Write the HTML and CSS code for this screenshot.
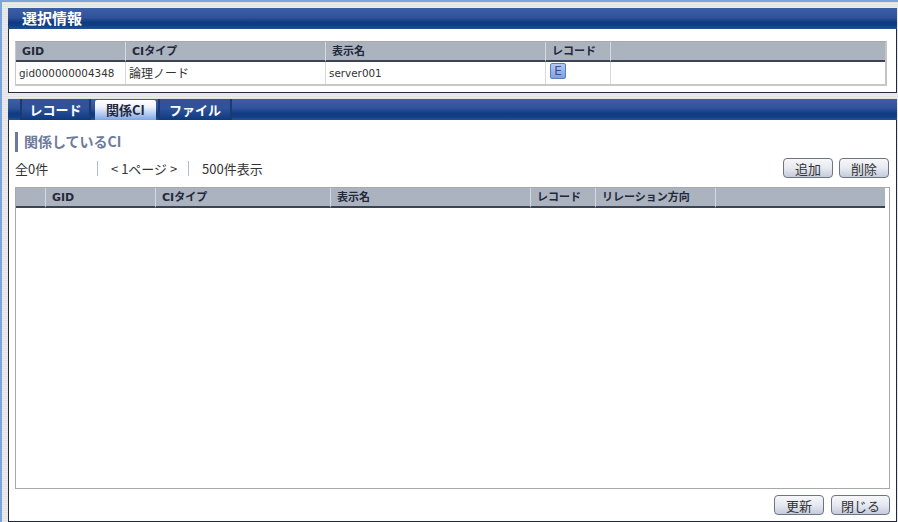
FILE: index.html
```html
<!DOCTYPE html>
<html lang="ja">
<head>
<meta charset="utf-8">
<title>選択情報</title>
<link rel="stylesheet" href="styles.css">
</head>
<body>
<section class="panel selected">
  <h1 class="bar">選択情報</h1>
  <div class="panel-body">
    <div class="table-wrap">
      <table class="grid">
        <colgroup><col class="s1"><col class="s2"><col class="s3"><col class="s4"><col></colgroup>
        <thead><tr><th>GID</th><th>CIタイプ</th><th>表示名</th><th>レコード</th><th></th></tr></thead>
        <tbody><tr>
          <td class="latin">gid000000004348</td><td class="cjk">論理ノード</td><td class="latin">server001</td>
          <td class="iconcell"><span class="e-btn">E</span></td><td></td>
        </tr></tbody>
      </table>
    </div>
  </div>
</section>
<section class="panel related">
  <nav class="bar tabs">
    <a class="tab">レコード</a>
    <a class="tab active">関係CI</a>
    <a class="tab">ファイル</a>
  </nav>
  <div class="panel-body main">
    <h2 class="title">関係しているCI</h2>
    <div class="toolbar">
      <span class="count">全0件</span>
      <span class="pager">&lt; 1ページ &gt;</span>
      <span class="perpage">500件表示</span>
      <span class="actions"><button class="btn">追加</button><button class="btn">削除</button></span>
    </div>
    <div class="list">
      <table class="grid">
        <colgroup><col class="r1"><col class="r2"><col class="r3"><col class="r4"><col class="r5"><col class="r6"><col></colgroup>
        <thead><tr><th></th><th>GID</th><th>CIタイプ</th><th>表示名</th><th>レコード</th><th>リレーション方向</th><th></th></tr></thead>
      </table>
    </div>
    <div class="footer"><button class="btn">更新</button><button class="btn wide">閉じる</button></div>
  </div>
</section>
</body>
</html>
```

FILE: styles.css
```css
* { box-sizing: border-box; }
html, body { margin: 0; height: 100%; }
body {
  width: 898px;
  height: 522px;
  overflow: hidden;
  padding: 6px 1px 0 6px;
  border-top: 2px solid #7ba3dc;
  border-left: 2px solid #7ba3dc;
  background: repeating-linear-gradient(#e2e2e2 0 1px, #ececec 1px 2px);
  font-family: "DejaVu Sans", "Noto Sans CJK JP", sans-serif;
  color: #222;
}
.bar {
  height: 21px;
  margin: 0;
  background: linear-gradient(#3c5fa8 0, #2f5299 45%, #0d3a80 70%, #123f86 85%, #2a4f92 100%);
  color: #fff;
  font-size: 15px;
  font-weight: 700;
  line-height: 20px;
  padding-left: 14px;
  font-family: "Noto Sans CJK JP", sans-serif;
}
.panel-body {
  background: #fff;
  border: 1px solid #23283c;
  border-top: 0;
}
.selected .panel-body { height: 64px; padding: 12px 9px 0 6px; }
.related { margin-top: 6px; }
.table-wrap {
  height: 45px;
  border: 1px solid #b0b0b0;
  border-width: 1px 2px 2px 1px;
  border-color: #a8a8a8 #c4c4c4 #c8c8c8 #c8c8c8;
}
.grid { border-collapse: separate; border-spacing: 0; table-layout: fixed; width: 869px; }
.grid th {
  height: 20px;
  padding: 2px 0 0 6px;
  background: #abb3bf;
  border-bottom: 2px solid #3c4354;
  border-right: 1px solid #d6dae0;
  color: #23283c;
  font-size: 11px;
  font-weight: 700;
  text-align: left;
  line-height: 16px;
}
.grid th:last-child { border-right: 0; }
.grid td {
  height: 22px;
  padding: 0 0 0 3px;
  border-right: 1px solid #d8d8d8;
  font-size: 10.4px;
  color: #333;
}
.grid td:last-child { border-right: 0; }
.grid td.cjk { font-size: 12px; padding-bottom: 2px; }
.grid td.iconcell { padding: 0 0 2px 4px; vertical-align: top; }
.s1 { width: 110px; }
.s2 { width: 200px; }
.s3 { width: 220px; }
.s4 { width: 65px; }
.r1 { width: 30px; }
.r2 { width: 110px; }
.r3 { width: 175px; }
.r4 { width: 200px; }
.r5 { width: 65px; }
.r6 { width: 120px; }
.e-btn {
  display: block;
  width: 16px;
  height: 16px;
  margin-top: 1px;
  border: 1px solid #5a7cb8;
  border-radius: 2px;
  background: linear-gradient(#b4c9f2, #7f9fe6);
  color: #3c4f80;
  font-size: 12px;
  line-height: 14px;
  text-align: center;
}
.main { height: 402px; padding: 12px 6px 0 6px; }
.title {
  height: 20px;
  margin: 0;
  border-left: 3px solid #6c7a9c;
  padding-left: 6px;
  color: #6c7a9c;
  font-size: 14px;
  font-weight: 700;
  line-height: 19px;
  font-family: "Noto Sans CJK JP", sans-serif;
}
.toolbar {
  display: flex;
  align-items: center;
  height: 20px;
  margin-top: 6px;
  font-size: 13px;
  color: #333;
  font-family: "Noto Sans CJK JP", sans-serif;
}
.count { width: 82px; }
.pager {
  width: 92px;
  height: 15px;
  line-height: 15px;
  padding-left: 13px;
  border-left: 1px solid #b4bdd0;
  border-right: 1px solid #b4bdd0;
}
.perpage { margin-left: 13px; }
.actions { margin-left: auto; margin-right: 1px; display: flex; gap: 6px; }
.btn {
  width: 50px;
  height: 20px;
  padding: 0;
  border: 1px solid #6e7480;
  border-radius: 4px;
  background: linear-gradient(#f6f7fa 0, #e6e9f0 50%, #c4cbdb 100%);
  color: #333;
  font-family: "Noto Sans CJK JP", sans-serif;
  font-size: 13px;
  line-height: 17px;
}
.btn.wide { width: 59px; margin-left: 7px; }
.list {
  height: 302px;
  margin-top: 9px;
  border: 1px solid #a8a8a8;
}
.footer {
  display: flex;
  justify-content: flex-end;
  margin-top: 6px;
}
.tabs {
  display: flex;
  padding-left: 12px;
  gap: 0;
}
.tab {
  display: block;
  height: 21px;
  color: #fff;
  font-size: 13px;
  text-align: center;
  line-height: 22px;
  width: 71px;
  border-left: 2px solid #1c3a70;
  border-right: 2px solid #1c3a70;
  background: linear-gradient(#2f5299 0, #2f5299 45%, #0d3a80 100%);
}
.tab.active {
  width: 61px;
  margin: 1px 2px 0 4px;
  height: 20px;
  line-height: 20px;
  border: 0;
  border-radius: 2px 2px 0 0;
  background: linear-gradient(#fff 0, #eef3fb 35%, #7da6e6 100%);
  color: #23283c;
}
.tab:last-child { width: 74px; }
```
